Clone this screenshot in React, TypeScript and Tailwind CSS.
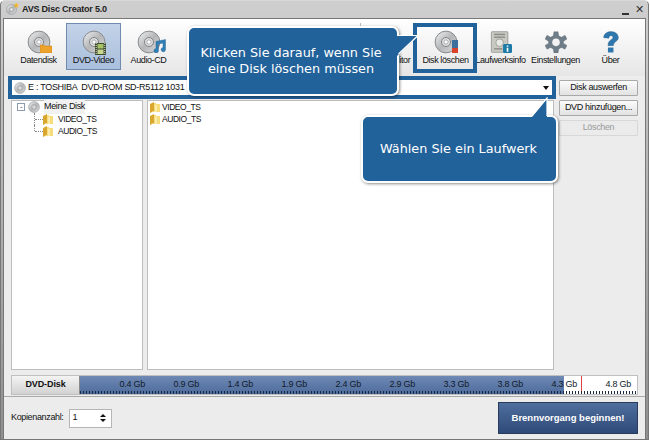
import React from 'react';

const Disc = ({ size = 24 }: { size?: number }) => (
  <svg width={size} height={size} viewBox="0 0 32 32" className="block shrink-0">
    <defs>
      <linearGradient id="discFill" x1="0" y1="0" x2="1" y2="1">
        <stop offset="0" stopColor="#f2f2f2" />
        <stop offset="0.5" stopColor="#b4b6b8" />
        <stop offset="1" stopColor="#dcdcdc" />
      </linearGradient>
    </defs>
    <circle cx="16" cy="16" r="14.5" fill="url(#discFill)" stroke="#85888b" strokeWidth="1.3" />
    <circle cx="16" cy="16" r="6" fill="#dedede" stroke="#7d8083" strokeWidth="1.3" />
    <circle cx="16" cy="16" r="2.8" fill="#fff" stroke="#9a9da0" />
  </svg>
);

const Folder = () => (
  <svg width="10" height="11" viewBox="0 0 10 11" className="block shrink-0">
    <path d="M0 2 L4 0 V9 L0 11 Z" fill="#d9a62f" />
    <path d="M4 1 H6 V2 H10 V10 H1 L4 9 Z" fill="#f7dc7c" />
    <path d="M6 3 V10" stroke="#fdf2bd" strokeWidth="1.5" />
  </svg>
);

const ToolIcon = ({ kind }: { kind: string }) => {
  if (kind === 'plain') return <Disc />;
  if (kind === 'data')
    return (
      <div className="relative w-[24px] h-[24px]">
        <Disc />
        <svg width="12" height="9" viewBox="0 0 12 9" className="absolute right-[-1px] bottom-[1px]">
          <path d="M0 1 H4 L5 2 H12 V9 H0 Z" fill="#eda32b" stroke="#c97f14" strokeWidth="0.5" />
        </svg>
      </div>
    );
  if (kind === 'dvd')
    return (
      <div className="relative w-[24px] h-[24px]">
        <Disc />
        <svg width="11" height="12" viewBox="0 0 11 12" className="absolute right-0 bottom-[-1px]">
          <rect width="11" height="12" fill="#3c4a2e" />
          <rect x="2.5" y="1" width="6" height="4.5" fill="#a8c268" />
          <rect x="2.5" y="6.5" width="6" height="4.5" fill="#c9d68f" />
          <path d="M1.2 0 V12 M9.8 0 V12" stroke="#e5e5d8" strokeWidth="1" strokeDasharray="1 1" />
        </svg>
      </div>
    );
  if (kind === 'audio')
    return (
      <div className="relative w-[24px] h-[24px]">
        <Disc />
        <svg width="14" height="14" viewBox="0 0 14 14" className="absolute right-[-5px] bottom-[1px]">
          <path d="M4 2.5 L13.5 0.5 V10.5 A2.2 2.2 0 1 1 11 8.4 V4 L6.5 5 V11.5 A2.3 2.3 0 1 1 4 9.4 Z" fill="#2f7fb8" stroke="#1e5a88" strokeWidth="0.4" />
        </svg>
      </div>
    );
  if (kind === 'erase')
    return (
      <div className="relative w-[24px] h-[24px]">
        <Disc />
        <div className="absolute right-[0px] bottom-[1px] w-[6px] h-[13px] flex flex-col">
          <div className="h-[8px] bg-[#3c6f9c]" />
          <div className="h-[5px] bg-[#d8432a]" />
        </div>
      </div>
    );
  if (kind === 'info')
    return (
      <svg width="22" height="22" viewBox="0 0 32 32" className="block">
        <rect x="2" y="1" width="24" height="30" rx="1" fill="#c9c9c4" stroke="#85857f" />
        <rect x="6" y="4" width="16" height="2" fill="#8b8b85" />
        <rect x="6" y="8" width="16" height="2" fill="#8b8b85" />
        <circle cx="14" cy="17" r="5.5" fill="#e8e8e4" stroke="#8b8b85" />
        <path d="M6 26 H18" stroke="#8b8b85" strokeWidth="2" />
        <rect x="19" y="19" width="13" height="13" rx="2" fill="#1c7ba6" />
        <path d="M25.5 21 V23 M25.5 24.5 V30" stroke="#fff" strokeWidth="2.4" />
      </svg>
    );
  if (kind === 'settings')
    return (
      <svg width="22" height="22" viewBox="0 0 32 32" className="block">
        <path
          d="M13 1 H19 L20 7 L24 9 L29 6 L32 11.5 L27 15 V18 L32 21 L29 26.5 L24 24 L20 26 L19 32 H13 L12 26 L8 24 L3 26.5 L0 21 L5 18 V15 L0 11.5 L3 6 L8 9 L12 7 Z"
          fill="#6f7d88"
          stroke="#566470"
          strokeWidth="0.5"
        />
        <circle cx="16" cy="16.5" r="5.5" fill="#f2f2f2" />
      </svg>
    );
  return (
    <svg width="16" height="22" viewBox="0 0 26 34" className="block">
      <path
        d="M1 10 C1 3 8 0 13 0 C21 0 25 5 25 10 C25 16 17 16 17 23 H8 C8 13 16 13 16 10 C16 8 15 7 13 7 C11 7 10 8 9.5 11 Z"
        fill="#2e77ad"
        stroke="#215a87"
        strokeWidth="0.5"
      />
      <rect x="8" y="26" width="9" height="8" fill="#2e77ad" />
    </svg>
  );
};

const ToolButton = ({ kind, label, active }: { kind: string; label: string; active?: boolean }) => (
  <div
    className={`w-[55px] h-[47px] shrink-0 flex flex-col items-center pt-[6px] ${
      active ? 'border border-[#6f8bb0] bg-gradient-to-b from-[#c3d3e8] to-[#a9bfdc]' : 'border border-transparent'
    }`}
  >
    <div className="h-[24px] flex items-center justify-center">
      <ToolIcon kind={kind} />
    </div>
    <span className="text-[9px] tracking-[-0.4px] leading-[12px] whitespace-nowrap">{label}</span>
  </div>
);

const SideButton = ({ label, disabled }: { label: string; disabled?: boolean }) => (
  <div
    className={`h-[16px] flex items-center justify-center text-[9px] tracking-[-0.35px] rounded-[1px] border ${
      disabled ? 'border-[#d8d8d8] text-[#9a9a9a] bg-[#ebebeb]' : 'border-[#a8a8a8] bg-gradient-to-b from-[#fbfbfb] to-[#e2e2e2]'
    }`}
  >
    {label}
  </div>
);

const scale = ['0.4 Gb', '0.9 Gb', '1.4 Gb', '1.9 Gb', '2.4 Gb', '2.9 Gb', '3.3 Gb', '3.8 Gb', '4.3 Gb', '4.8 Gb'];

export default function App() {
  return (
    <div className="relative w-[650px] h-[443px] overflow-hidden bg-white text-[#111] font-['Liberation_Sans',Arial,sans-serif]">
      <div className="w-[649px] h-[440px] flex flex-col bg-gradient-to-b from-[#cfcfcf] to-[#8f8f8f] rounded-t-[5px] border border-[#777] border-t-[#d8d8d8]">
        {/* title bar */}
        <div className="h-[17px] shrink-0 flex items-center pl-[5px] pr-[3px] gap-[3px]">
          <div className="relative">
            <Disc size={11} />
            <span className="absolute right-[-3px] top-[-3px] text-[8px] leading-[9px] text-[#f2b823]">★</span>
          </div>
          <span className="text-[9px] tracking-[-0.2px] font-bold text-[#222] ml-[2px]">AVS Disc Creator 5.0</span>
          <div className="flex-1" />
          <span className="w-[7px] h-[2px] bg-[#333] mt-[8px] mr-[3px]" />
          <span className="text-[11px] leading-[13px] text-[#333] mr-[1px]">✕</span>
        </div>

        <div className="flex-1 min-h-0 mx-[2px] border border-[#777] border-b-0 bg-[#ececec] flex flex-col">
          {/* toolbar */}
          <div className="h-[57px] shrink-0 flex items-start pt-[4px] pl-[7px] bg-gradient-to-b from-white to-[#e6e6e6]">
            <ToolButton kind="data" label="Datendisk" />
            <ToolButton kind="dvd" label="DVD-Video" active />
            <ToolButton kind="audio" label="Audio-CD" />
            <div className="w-[185px] h-[20px] mr-[2px] shrink-0 border-r border-[#bbb]" />
            <ToolButton kind="plain" label="Disk-Editor" />
            <ToolButton kind="erase" label="Disk löschen" />
            <ToolButton kind="info" label="Laufwerksinfo" />
            <ToolButton kind="settings" label="Einstellungen" />
            <ToolButton kind="help" label="Über" />
          </div>

          <div className="flex-1 min-h-0 flex flex-col px-[7px] pt-[4px]">
            <div className="flex-1 min-h-0 flex gap-[5px]">
              {/* drive + panels */}
              <div className="flex-1 min-w-0 flex flex-col gap-[4px]">
                <div className="h-[16px] shrink-0 flex items-center gap-[2px] bg-white pl-[3px] pr-[5px] text-[9px] tracking-[-0.3px]">
                  <Disc size={12} />
                  <span className="whitespace-pre">E : TOSHIBA  DVD-ROM SD-R5112 1031</span>
                  <span className="ml-[15px]">[</span>
                  <div className="flex-1" />
                  <span className="w-0 h-0 border-x-[3px] border-x-transparent border-t-[4px] border-t-[#111]" />
                </div>
                <div className="flex-1 min-h-0 flex gap-[4px]">
                  <div className="w-[132px] shrink-0 bg-white border border-[#bdbdbd] text-[8.5px] tracking-[-0.45px] pl-[5px]">
                    <div className="flex items-center h-[12px]">
                      <span className="w-[8px] h-[8px] border border-[#8d9bb0] flex items-center justify-center text-[#445] leading-[6px] text-[8px]">-</span>
                      <div className="w-[3px]" />
                      <Disc size={12} />
                      <span className="ml-[4px] text-[9px] tracking-[-0.35px] bg-[#f1f1f1]">Meine Disk</span>
                    </div>
                    <div className="flex items-center h-[12px] ml-[17px]">
                      <span className="h-full border-l border-dotted border-[#888]" />
                      <span className="w-[8px] border-t border-dotted border-[#888]" />
                      <Folder />
                      <span className="ml-[5px]">VIDEO_TS</span>
                    </div>
                    <div className="flex items-center h-[12px] ml-[17px]">
                      <span className="h-[6px] self-start border-l border-dotted border-[#888]" />
                      <span className="w-[8px] border-t border-dotted border-[#888]" />
                      <Folder />
                      <span className="ml-[5px]">AUDIO_TS</span>
                    </div>
                  </div>
                  <div className="flex-1 min-w-0 bg-white border border-[#bdbdbd] text-[8.5px] tracking-[-0.45px] pl-[2px]">
                    <div className="flex items-center h-[12px] gap-[2px]">
                      <Folder />
                      <span>VIDEO_TS</span>
                    </div>
                    <div className="flex items-center h-[12px] gap-[2px]">
                      <Folder />
                      <span>AUDIO_TS</span>
                    </div>
                  </div>
                </div>
              </div>
              {/* right buttons */}
              <div className="w-[79px] shrink-0 flex flex-col gap-[4px]">
                <SideButton label="Disk auswerfen" />
                <SideButton label="DVD hinzufügen..." />
                <SideButton label="Löschen" disabled />
              </div>
            </div>

            {/* capacity bar */}
            <div className="relative h-[20px] shrink-0 mt-[5px] flex border border-[#c0c0c0]">
              <div className="w-[68px] shrink-0 flex items-center justify-center text-[9px] tracking-[-0.1px] font-bold bg-gradient-to-b from-[#f4f4f4] to-[#d2d2d2] border-r border-[#8a8a8a]">
                DVD-Disk
              </div>
              <div className="flex-1 flex pl-[11px] pt-[2px] text-[9px] tracking-[-0.25px] leading-[12px] bg-white bg-no-repeat bg-[length:484px_100%] bg-[linear-gradient(#6f89b4,#4d6b9c)]">
                {scale.map(s => (
                  <span key={s} className="w-[54px] shrink-0 text-right text-[#101a2a]">
                    {s}
                  </span>
                ))}
              </div>
              <span className="absolute left-[569px] top-0 bottom-0 w-px bg-[#e04040]" />
              <div className="absolute left-[68px] right-0 bottom-0 h-[3px] bg-[repeating-linear-gradient(90deg,#1a2a44_0,#1a2a44_1px,transparent_1px,transparent_3px)]" />
            </div>
          </div>

          {/* bottom row */}
          <div className="h-[43px] shrink-0 mt-[1px] border-t border-[#a9a9a9] flex items-center px-[7px]">
            <span className="text-[9px] tracking-[-0.35px] mr-[5px]">Kopienanzahl:</span>
            <div className="w-[43px] h-[19px] bg-white border border-[#b5b5b5] flex items-center justify-between px-[3px] text-[9px]">
              <span>1</span>
              <div className="flex flex-col gap-[2px] mr-[2px]">
                <span className="w-0 h-0 border-x-[3px] border-x-transparent border-b-[3px] border-b-[#111]" />
                <span className="w-0 h-0 border-x-[3px] border-x-transparent border-t-[3px] border-t-[#111]" />
              </div>
            </div>
            <div className="flex-1" />
            <div className="w-[140px] h-[32px] flex items-center justify-center text-[9.5px] font-bold text-white border border-[#2a3c5c] bg-gradient-to-b from-[#4f6f9e] to-[#2f4a78]">
              Brennvorgang beginnen!
            </div>
          </div>
        </div>
      </div>

      {/* highlight frames */}
      <div className="absolute left-[413px] top-[23px] w-[64px] h-[50px] border-[4px] border-[#22629b]" />
      <div className="absolute left-[8px] top-[76px] w-[548px] h-[23px] border-[4px] border-[#22629b]" />

      {/* callouts */}
      <div className="absolute left-[187px] top-[26px] w-[212px] h-[70px] pr-[4px] rounded-[7px] bg-[#22629b] border-2 border-white shadow-[1px_1px_3px_rgba(0,0,0,0.45)] flex items-center justify-center text-center text-white text-[12.8px] leading-[16px] font-['DejaVu_Sans',sans-serif]">
        Klicken Sie darauf, wenn Sie
        <br />
        eine Disk löschen müssen
      </div>
      <svg width="24" height="24" viewBox="0 0 24 24" className="absolute left-[396px] top-[34px]">
        <path d="M0 2 H22 L1 22 H0 Z" fill="#22629b" />
        <path d="M2 1.5 H22 L2.5 20" fill="none" stroke="#fff" strokeWidth="1.2" />
      </svg>
      <div className="absolute left-[361px] top-[115px] w-[197px] h-[68px] pr-[2px] rounded-[7px] bg-[#22629b] border-2 border-white shadow-[1px_1px_3px_rgba(0,0,0,0.45)] flex items-center justify-center text-white text-[12.8px] font-['DejaVu_Sans',sans-serif]">
        Wählen Sie ein Laufwerk
      </div>
      <svg width="20" height="22" viewBox="0 0 20 22" className="absolute left-[530px] top-[97px]">
        <path d="M1 21 L17 1 V21 Z" fill="#22629b" />
        <path d="M2 19 L17 1 V19" fill="none" stroke="#fff" strokeWidth="1.2" />
      </svg>
    </div>
  );
}
